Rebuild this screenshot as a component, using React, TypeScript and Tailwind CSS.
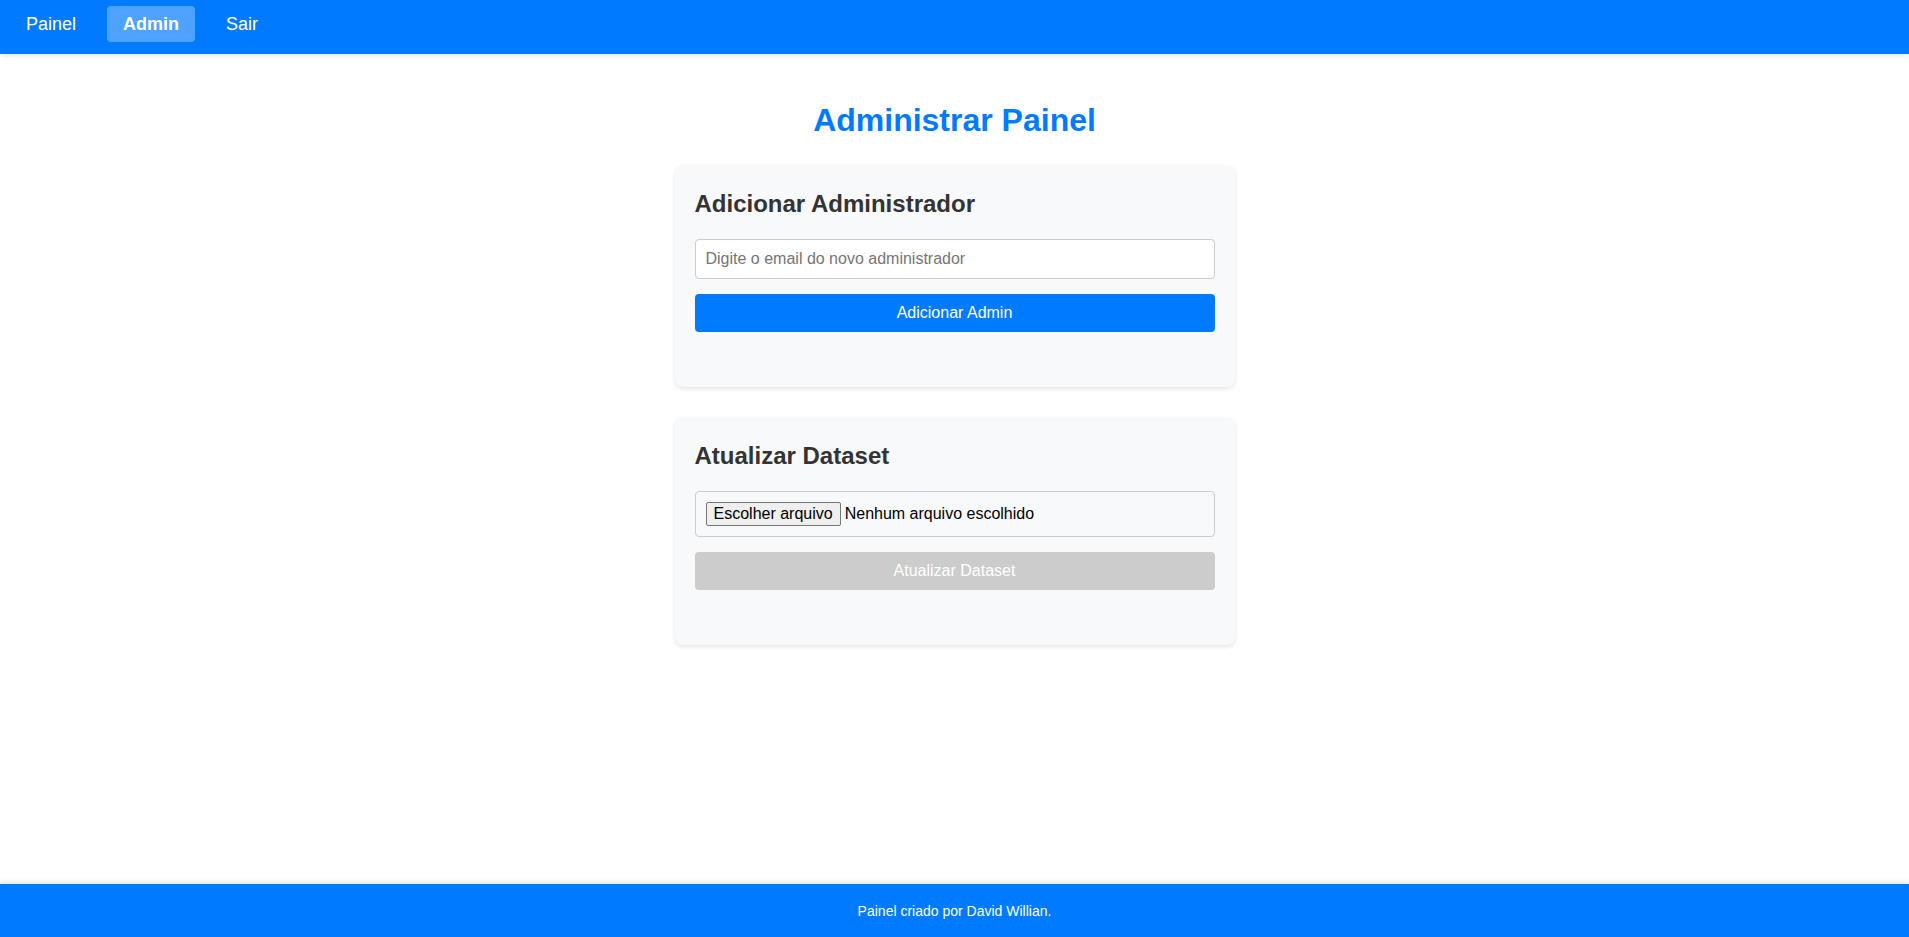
import { useState } from "react";
import type { ReactNode } from "react";

const links = [
  { label: "Painel", href: "#painel", active: false },
  { label: "Admin", href: "#admin", active: true },
  { label: "Sair", href: "#sair", active: false },
];

function Card({ title, children }: { title: string; children: ReactNode }) {
  return (
    <section className="rounded-lg bg-[#f8f9fb] px-5 pt-[22px] pb-[55px] shadow-[0_2px_4px_rgba(0,0,0,0.1)]">
      <h2 className="mb-[18px] text-2xl leading-[34px] font-bold text-[#333333]">{title}</h2>
      <form className="flex flex-col gap-[15px]" onSubmit={(e) => e.preventDefault()}>
        {children}
      </form>
    </section>
  );
}

export default function App() {
  const [fileName, setFileName] = useState("");

  return (
    <div className="flex min-h-screen flex-col bg-white font-['Liberation_Sans',Arial,sans-serif] text-base text-black">
      <nav className="bg-[#007bff] px-2.5 pt-1.5 pb-3 shadow-[0_2px_5px_rgba(0,0,0,0.1)]">
        <ul className="flex gap-[15px]">
          {links.map((link) => (
            <li key={link.label}>
              <a
                href={link.href}
                aria-current={link.active ? "page" : undefined}
                className={
                  link.active
                    ? "block rounded bg-white/30 px-4 py-2 text-lg leading-5 font-bold text-white"
                    : "block rounded px-4 py-2 text-lg leading-5 text-white"
                }
              >
                {link.label}
              </a>
            </li>
          ))}
        </ul>
      </nav>

      <main className="mx-auto w-full max-w-[600px] flex-1 px-5 pt-12 pb-5">
        <h1 className="mb-[26px] text-center text-[32px] leading-[37px] font-bold text-[#007bff]">
          Administrar Painel
        </h1>
        <div className="flex flex-col gap-[30px]">
          <Card title="Adicionar Administrador">
            <input
              type="email"
              aria-label="Email do novo administrador"
              placeholder="Digite o email do novo administrador"
              className="w-full rounded border border-[#cccccc] bg-white px-2.5 py-2.5 leading-[18px] placeholder:text-[#757575]"
            />
            <button type="submit" className="w-full cursor-pointer rounded bg-[#007bff] py-2.5 leading-[18px] text-white">
              Adicionar Admin
            </button>
          </Card>

          <Card title="Atualizar Dataset">
            <label className="relative flex items-center gap-1 rounded border border-[#cccccc] p-2.5 focus-within:outline-2">
              <input
                type="file"
                aria-label="Arquivo do dataset"
                className="sr-only"
                onChange={(e) => setFileName(e.target.files?.[0]?.name ?? "")}
              />
              <span className="rounded-xs border border-[#767676] bg-[#efefef] px-[7px] py-px leading-5">
                Escolher arquivo
              </span>
              <span className="leading-5">{fileName || "Nenhum arquivo escolhido"}</span>
            </label>
            <button
              type="submit"
              disabled={!fileName}
              className="w-full rounded bg-[#007bff] py-2.5 leading-[18px] text-white disabled:bg-[#cccccc]"
            >
              Atualizar Dataset
            </button>
          </Card>
        </div>
      </main>

      <footer className="bg-[#007bff] pt-[19px] pb-[17px] text-center text-sm leading-[17px] text-white shadow-[0_-2px_5px_rgba(0,0,0,0.1)]">
        <p>Painel criado por David Willian.</p>
      </footer>
    </div>
  );
}
